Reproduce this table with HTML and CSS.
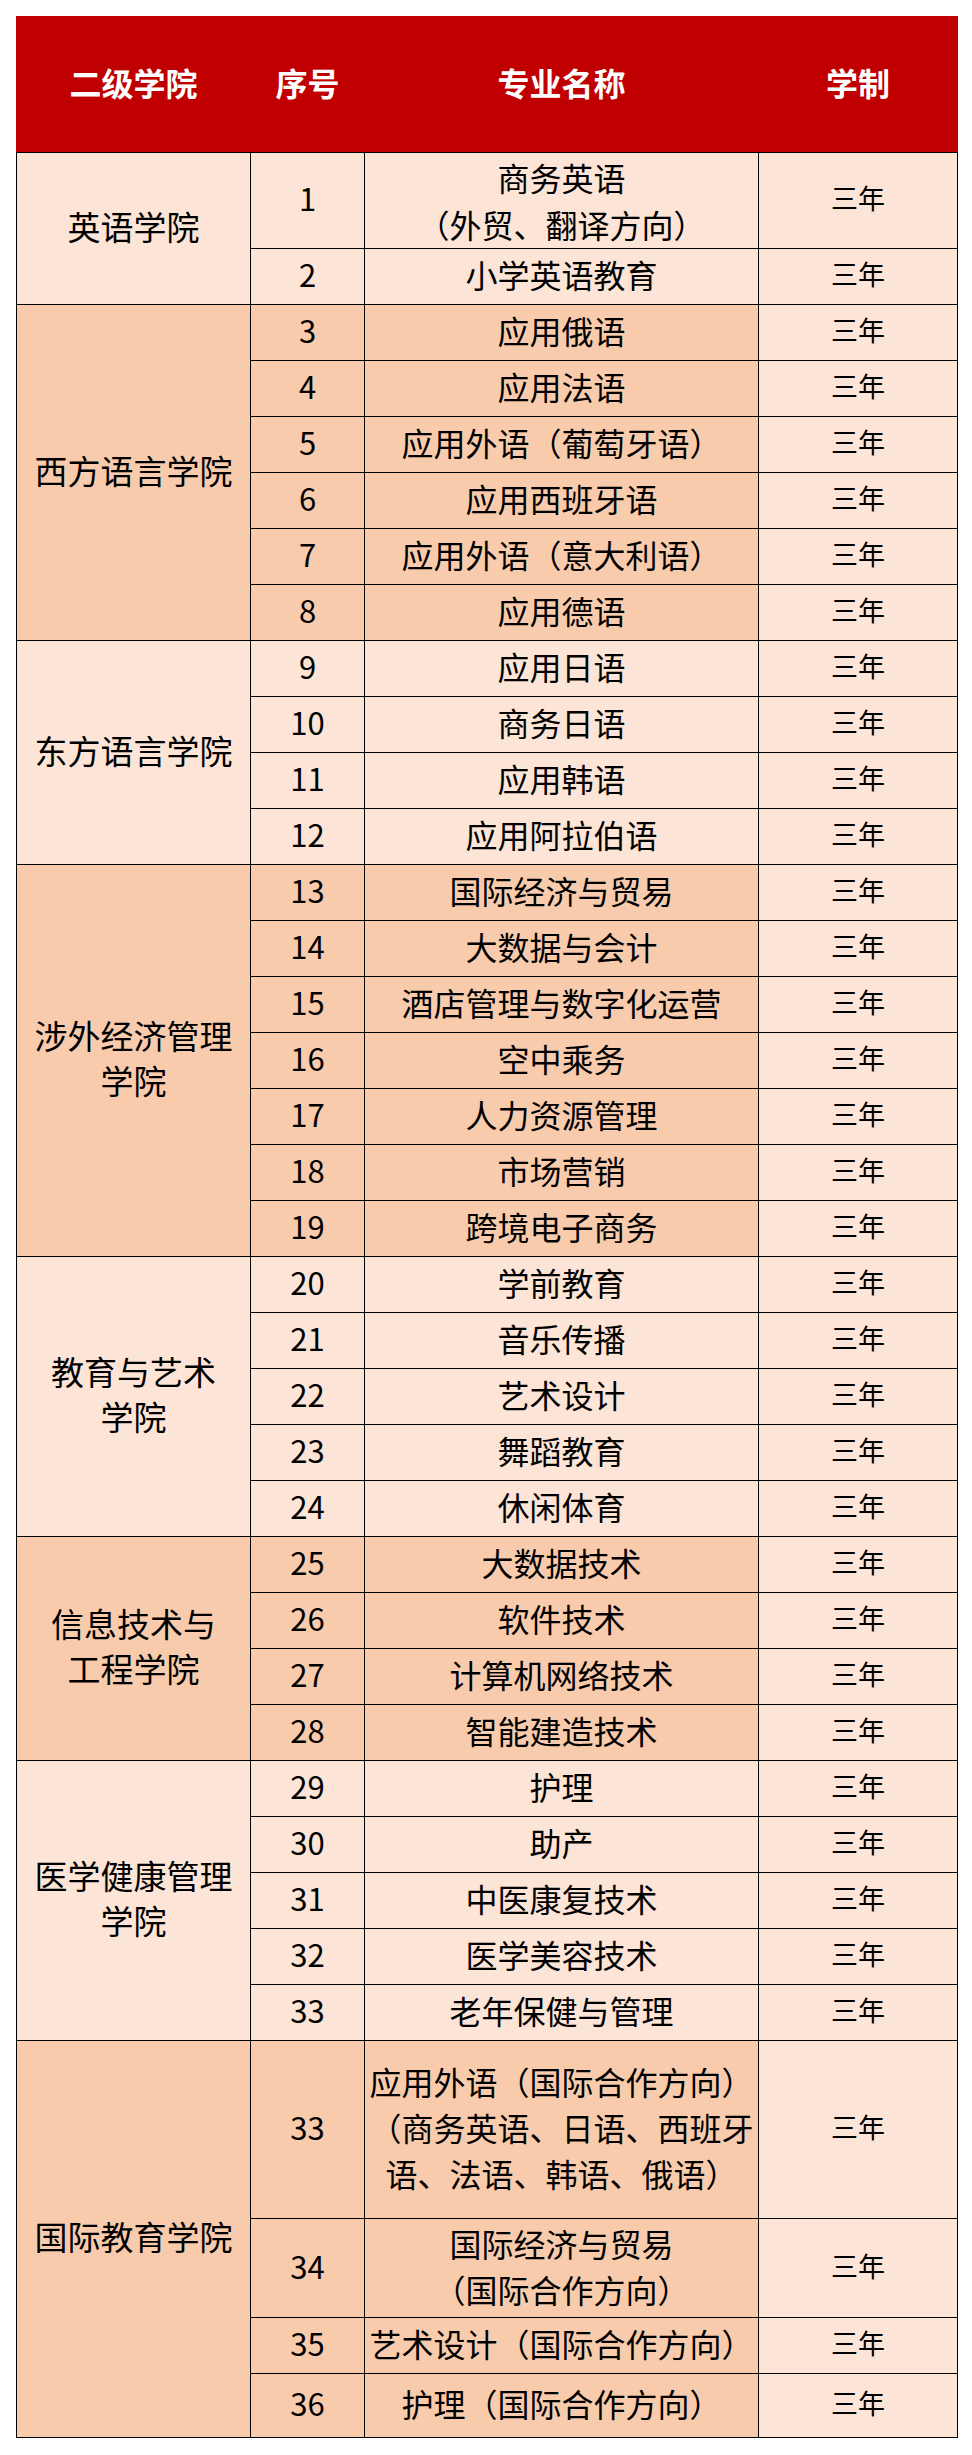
FILE: index.html
```html
<!DOCTYPE html>
<html lang="zh-CN">
<head>
<meta charset="utf-8">
<title>专业设置</title>
<link rel="stylesheet" href="styles.css">
</head>
<body>
<div class="page">
<table class="majors">
  <colgroup>
    <col class="c-college"><col class="c-no"><col class="c-major"><col class="c-years">
  </colgroup>
  <thead>
    <tr class="head"><th>二级学院</th><th>序号</th><th>专业名称</th><th>学制</th></tr>
  </thead>
  <tbody class="light">
    <tr class="h96"><td class="college" rowspan="2">英语学院</td><td class="no">1</td><td class="major">商务英语<br>（外贸、翻译方向）</td><td class="yr">三年</td></tr>
    <tr><td class="no">2</td><td class="major">小学英语教育</td><td class="yr">三年</td></tr>
  </tbody>
  <tbody class="dark">
    <tr><td class="college" rowspan="6">西方语言学院</td><td class="no">3</td><td class="major">应用俄语</td><td class="yr">三年</td></tr>
    <tr><td class="no">4</td><td class="major">应用法语</td><td class="yr">三年</td></tr>
    <tr><td class="no">5</td><td class="major">应用外语（葡萄牙语）</td><td class="yr">三年</td></tr>
    <tr><td class="no">6</td><td class="major">应用西班牙语</td><td class="yr">三年</td></tr>
    <tr><td class="no">7</td><td class="major">应用外语（意大利语）</td><td class="yr">三年</td></tr>
    <tr><td class="no">8</td><td class="major">应用德语</td><td class="yr">三年</td></tr>
  </tbody>
  <tbody class="light">
    <tr><td class="college" rowspan="4">东方语言学院</td><td class="no">9</td><td class="major">应用日语</td><td class="yr">三年</td></tr>
    <tr><td class="no">10</td><td class="major">商务日语</td><td class="yr">三年</td></tr>
    <tr><td class="no">11</td><td class="major">应用韩语</td><td class="yr">三年</td></tr>
    <tr><td class="no">12</td><td class="major">应用阿拉伯语</td><td class="yr">三年</td></tr>
  </tbody>
  <tbody class="dark">
    <tr><td class="college" rowspan="7">涉外经济管理<br>学院</td><td class="no">13</td><td class="major">国际经济与贸易</td><td class="yr">三年</td></tr>
    <tr><td class="no">14</td><td class="major">大数据与会计</td><td class="yr">三年</td></tr>
    <tr><td class="no">15</td><td class="major">酒店管理与数字化运营</td><td class="yr">三年</td></tr>
    <tr><td class="no">16</td><td class="major">空中乘务</td><td class="yr">三年</td></tr>
    <tr><td class="no">17</td><td class="major">人力资源管理</td><td class="yr">三年</td></tr>
    <tr><td class="no">18</td><td class="major">市场营销</td><td class="yr">三年</td></tr>
    <tr><td class="no">19</td><td class="major">跨境电子商务</td><td class="yr">三年</td></tr>
  </tbody>
  <tbody class="light">
    <tr><td class="college" rowspan="5">教育与艺术<br>学院</td><td class="no">20</td><td class="major">学前教育</td><td class="yr">三年</td></tr>
    <tr><td class="no">21</td><td class="major">音乐传播</td><td class="yr">三年</td></tr>
    <tr><td class="no">22</td><td class="major">艺术设计</td><td class="yr">三年</td></tr>
    <tr><td class="no">23</td><td class="major">舞蹈教育</td><td class="yr">三年</td></tr>
    <tr><td class="no">24</td><td class="major">休闲体育</td><td class="yr">三年</td></tr>
  </tbody>
  <tbody class="dark">
    <tr><td class="college" rowspan="4">信息技术与<br>工程学院</td><td class="no">25</td><td class="major">大数据技术</td><td class="yr">三年</td></tr>
    <tr><td class="no">26</td><td class="major">软件技术</td><td class="yr">三年</td></tr>
    <tr><td class="no">27</td><td class="major">计算机网络技术</td><td class="yr">三年</td></tr>
    <tr><td class="no">28</td><td class="major">智能建造技术</td><td class="yr">三年</td></tr>
  </tbody>
  <tbody class="light">
    <tr><td class="college" rowspan="5">医学健康管理<br>学院</td><td class="no">29</td><td class="major">护理</td><td class="yr">三年</td></tr>
    <tr><td class="no">30</td><td class="major">助产</td><td class="yr">三年</td></tr>
    <tr><td class="no">31</td><td class="major">中医康复技术</td><td class="yr">三年</td></tr>
    <tr><td class="no">32</td><td class="major">医学美容技术</td><td class="yr">三年</td></tr>
    <tr><td class="no">33</td><td class="major">老年保健与管理</td><td class="yr">三年</td></tr>
  </tbody>
  <tbody class="dark">
    <tr class="h178"><td class="college" rowspan="4">国际教育学院</td><td class="no">33</td><td class="major">应用外语（国际合作方向）<br>（商务英语、日语、西班牙<br>语、法语、韩语、俄语）</td><td class="yr">三年</td></tr>
    <tr class="h99"><td class="no">34</td><td class="major">国际经济与贸易<br>（国际合作方向）</td><td class="yr">三年</td></tr>
    <tr><td class="no">35</td><td class="major">艺术设计（国际合作方向）</td><td class="yr">三年</td></tr>
    <tr class="h64"><td class="no">36</td><td class="major">护理（国际合作方向）</td><td class="yr">三年</td></tr>
  </tbody>
</table>
</div>
</body>
</html>
```

FILE: styles.css
```css
html, body {
  margin: 0;
  padding: 0;
  background: #ffffff;
}

.page {
  padding: 16px 0 0 16px;
  font-family: "Noto Sans CJK SC", "Microsoft YaHei", sans-serif;
  color: #000000;
}

.majors {
  border-collapse: collapse;
  table-layout: fixed;
  width: 941px;
}

.c-college { width: 234px; }
.c-no { width: 114px; }
.c-major { width: 394px; }
.c-years { width: 199px; }

.majors th,
.majors td {
  padding: 0 0 5px 0;
  text-align: center;
  vertical-align: middle;
}

.majors tr { height: 56px; }
.majors tr.head { height: 136px; }
.majors tr.h96 { height: 96px; }
.majors tr.h178 { height: 178px; }
.majors tr.h99 { height: 99px; }
.majors tr.h64 { height: 64px; }

.majors th {
  background: #c00000;
  color: #ffffff;
  font-size: 32px;
  font-weight: 700;
  border: 1px solid #c00000;
  border-bottom-color: #000000;
}

.majors td {
  border: 1px solid #000000;
  line-height: 46px;
  font-size: 32px;
}

.light td { background: #fce4d6; }
.dark td { background: #f8cbad; }
.majors td.yr {
  background: #fce4d6;
  font-size: 27px;
}

.majors td.college {
  font-size: 33px;
  line-height: 45px;
}

.majors td.no {
  font-size: 31px;
}

.majors tr.h96 td.major {
  line-height: 47px;
  padding: 0;
}
```
